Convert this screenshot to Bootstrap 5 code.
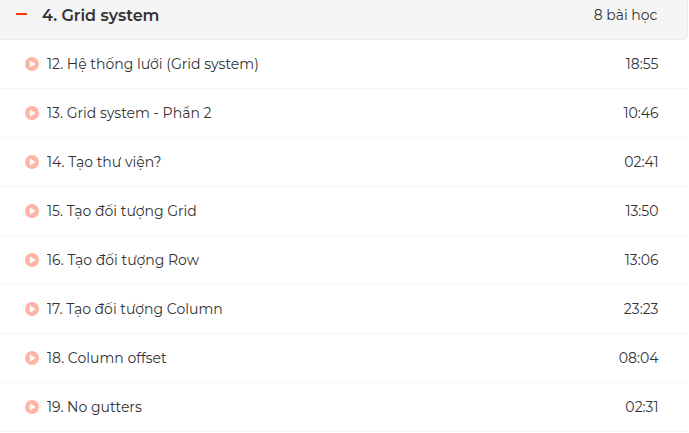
<!DOCTYPE html>
<html lang="vi">
<head>
<meta charset="utf-8">
<meta name="viewport" content="width=device-width, initial-scale=1">
<title>Grid system</title>
<link href="https://cdn.jsdelivr.net/npm/bootstrap@5.3.0/dist/css/bootstrap.min.css" rel="stylesheet">
<style>
body{font-family:Montserrat,Inter,"Noto Sans",sans-serif;font-size:14px;line-height:20px;color:#333;overflow:hidden}
.course-panel{width:688px}
.section-head{height:40px;background:#f5f5f5;border:1px solid #ebebeb;border-width:0 1px 1px 0;border-radius:0 0 6px 0;padding:0 29.5px 8px 16px}
.section-title{font-size:16px;font-weight:600;line-height:22px;margin-left:15px}
.section-count{margin-top:-2px}
.collapse-mark{width:11px;height:2px;background:#ff3705;margin-top:-3px}
.lesson{height:49px;border-color:#f5f5f5;border-radius:0;padding:0 29.5px 0 25px;color:#333}
.list-group-flush>.lesson,.list-group-flush>.lesson:last-child{border-width:0 0 1px}
.lesson svg{margin-right:8px}
.lesson-name{letter-spacing:.01px}
</style>
<script src="https://cdn.jsdelivr.net/npm/bootstrap@5.3.0/dist/js/bootstrap.bundle.min.js"></script>
</head>
<body class="bg-white">
<svg class="d-none"><symbol id="play" viewBox="0 0 14 14"><circle cx="7" cy="7" r="7" fill="#ffb5a5"/><path d="M5.3 4.2v5.6L10 7z" fill="#fff" stroke="#fff" stroke-width="1" stroke-linejoin="round"/></symbol></svg>
<main class="course-panel">
<div class="section-head d-flex align-items-center"><span class="collapse-mark"></span><span class="section-title">4. Grid system</span><span class="section-count ms-auto">8 bài học</span></div>
<div class="list-group list-group-flush">
<div class="list-group-item lesson d-flex align-items-center"><svg width="14" height="14"><use href="#play"/></svg><span class="lesson-name">12. Hệ thống lưới (Grid system)</span><span class="ms-auto">18:55</span></div>
<div class="list-group-item lesson d-flex align-items-center"><svg width="14" height="14"><use href="#play"/></svg><span class="lesson-name">13. Grid system - Phần 2</span><span class="ms-auto">10:46</span></div>
<div class="list-group-item lesson d-flex align-items-center"><svg width="14" height="14"><use href="#play"/></svg><span class="lesson-name">14. Tạo thư viện?</span><span class="ms-auto">02:41</span></div>
<div class="list-group-item lesson d-flex align-items-center"><svg width="14" height="14"><use href="#play"/></svg><span class="lesson-name">15. Tạo đối tượng Grid</span><span class="ms-auto">13:50</span></div>
<div class="list-group-item lesson d-flex align-items-center"><svg width="14" height="14"><use href="#play"/></svg><span class="lesson-name">16. Tạo đối tượng Row</span><span class="ms-auto">13:06</span></div>
<div class="list-group-item lesson d-flex align-items-center"><svg width="14" height="14"><use href="#play"/></svg><span class="lesson-name">17. Tạo đối tượng Column</span><span class="ms-auto">23:23</span></div>
<div class="list-group-item lesson d-flex align-items-center"><svg width="14" height="14"><use href="#play"/></svg><span class="lesson-name">18. Column offset</span><span class="ms-auto">08:04</span></div>
<div class="list-group-item lesson d-flex align-items-center"><svg width="14" height="14"><use href="#play"/></svg><span class="lesson-name">19. No gutters</span><span class="ms-auto">02:31</span></div>
</div>
</main>
</body>
</html>
